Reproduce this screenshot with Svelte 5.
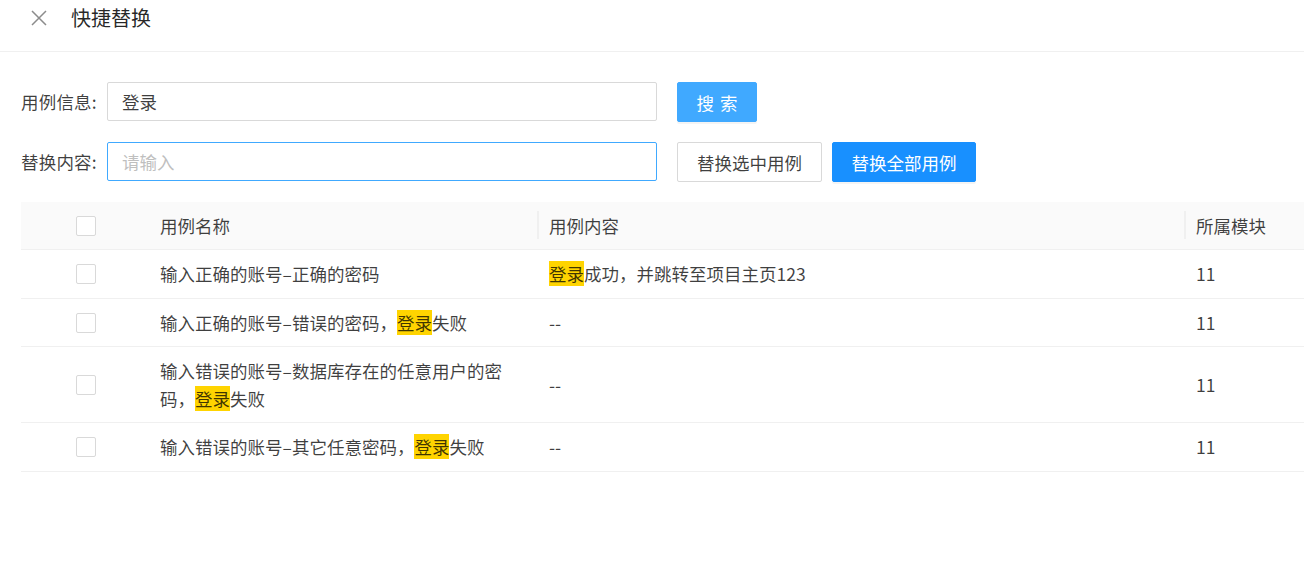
<script>
  const rows = [
    { name: ['输入正确的账号–正确的密码'], content: ['', '登录', '成功，并跳转至项目主页123'], module: '11' },
    { name: ['输入正确的账号–错误的密码，', '登录', '失败'], content: ['--'], module: '11' },
    { name: ['输入错误的账号–数据库存在的任意用户的密码，', '登录', '失败'], content: ['--'], module: '11' },
    { name: ['输入错误的账号–其它任意密码，', '登录', '失败'], content: ['--'], module: '11' }
  ];
</script>

{#snippet marked(parts)}
  {parts[0]}{#if parts[1]}<mark>{parts[1]}</mark>{parts[2]}{/if}
{/snippet}

<div class="page">
  <header>
    <button class="close" aria-label="关闭">
      <svg width="16" height="16" viewBox="0 0 16 16">
        <path d="M1 1 L15 15 M15 1 L1 15" stroke="#8c8c8c" stroke-width="1.5" fill="none" />
      </svg>
    </button>
    <span class="title">快捷替换</span>
  </header>

  <section class="form">
    <div class="form-row">
      <label for="info">用例信息:</label>
      <input id="info" value="登录" />
      <button class="btn search">搜 索</button>
    </div>
    <div class="form-row">
      <label for="replace">替换内容:</label>
      <input id="replace" class="focused" placeholder="请输入" />
      <button class="btn">替换选中用例</button>
      <button class="btn primary">替换全部用例</button>
    </div>
  </section>

  <table>
    <colgroup>
      <col class="c-check" />
      <col class="c-name" />
      <col class="c-content" />
      <col />
    </colgroup>
    <thead>
      <tr>
        <th><span class="box"></span></th>
        <th>用例名称</th>
        <th class="sep">用例内容</th>
        <th class="sep">所属模块</th>
      </tr>
    </thead>
    <tbody>
      {#each rows as row}
        <tr>
          <td><span class="box"></span></td>
          <td>{@render marked(row.name)}</td>
          <td class="shift">{@render marked(row.content)}</td>
          <td class="shift">{row.module}</td>
        </tr>
      {/each}
    </tbody>
  </table>
</div>

<style>
  :global(body) {
    margin: 0;
    background: #fff;
    overflow: hidden;
  }

  .page {
    width: 1304px;
    height: 584px;
    overflow: hidden;
    font-family: "Noto Sans CJK SC", "Liberation Sans", sans-serif;
    font-size: 17.5px;
    color: rgba(0, 0, 0, 0.75);
  }

  header {
    display: flex;
    align-items: center;
    height: 35px;
    padding-bottom: 16px;
    border-bottom: 1px solid #f0f0f0;
  }

  .close {
    display: flex;
    margin-left: 31px;
    padding: 0;
    border: 0;
    background: none;
  }

  .title {
    margin-left: 24px;
    font-size: 20px;
    color: rgba(0, 0, 0, 0.85);
  }

  .form {
    display: flex;
    flex-direction: column;
    gap: 20px;
    padding: 30px 0 20px 21px;
  }

  .form-row {
    display: flex;
    align-items: flex-start;
    height: 40px;
  }

  label {
    width: 77px;
    margin-right: 9px;
    line-height: 39px;
    letter-spacing: 0.2px;
    white-space: nowrap;
  }

  input {
    box-sizing: border-box;
    width: 550px;
    height: 39px;
    padding: 0 14px;
    border: 1px solid #d9d9d9;
    border-radius: 2px;
    outline: none;
    font: inherit;
    color: inherit;
  }

  input.focused {
    border-color: #40a9ff;
  }

  input::placeholder {
    color: #bfbfbf;
  }

  .btn {
    box-sizing: border-box;
    height: 40px;
    margin-left: 10px;
    padding: 0 19px;
    border: 1px solid #d9d9d9;
    border-radius: 2px;
    background: #fff;
    font: inherit;
    color: inherit;
    white-space: nowrap;
  }

  .form-row input + .btn {
    margin-left: 20px;
  }

  .search {
    width: 80px;
    padding: 0;
    border-color: #40a9ff;
    background: #40a9ff;
    color: #fff;
    word-spacing: 2px;
    box-shadow: 0 2px 0 rgba(0, 0, 0, 0.045);
  }

  .primary {
    padding: 0 18.5px;
    border-color: #1890ff;
    background: #1890ff;
    color: #fff;
    box-shadow: 0 2px 0 rgba(0, 0, 0, 0.045);
  }

  table {
    width: 1283px;
    margin-left: 21px;
    border-collapse: separate;
    border-spacing: 0;
    table-layout: fixed;
  }

  .c-check {
    width: 129px;
  }

  .c-name {
    width: 388px;
  }

  .c-content {
    width: 647px;
  }

  th,
  td {
    padding: 10px;
    border-bottom: 1px solid #f0f0f0;
    line-height: 27.5px;
    text-align: left;
    font-weight: 400;
  }

  th {
    position: relative;
    line-height: 27px;
    background: #fafafa;
  }

  .shift,
  .sep {
    padding-left: 11px;
  }

  th:first-child,
  td:first-child {
    padding: 0;
  }

  .sep::before {
    content: "";
    position: absolute;
    left: -1px;
    top: 9px;
    width: 2px;
    height: 28px;
    background: #f0f0f0;
  }

  .box {
    display: block;
    box-sizing: border-box;
    width: 20px;
    height: 20px;
    margin: 1px auto 0;
    border: 1px solid #d9d9d9;
    border-radius: 2px;
    background: #fff;
  }

  mark {
    background: #ffd400;
    color: inherit;
  }
</style>
